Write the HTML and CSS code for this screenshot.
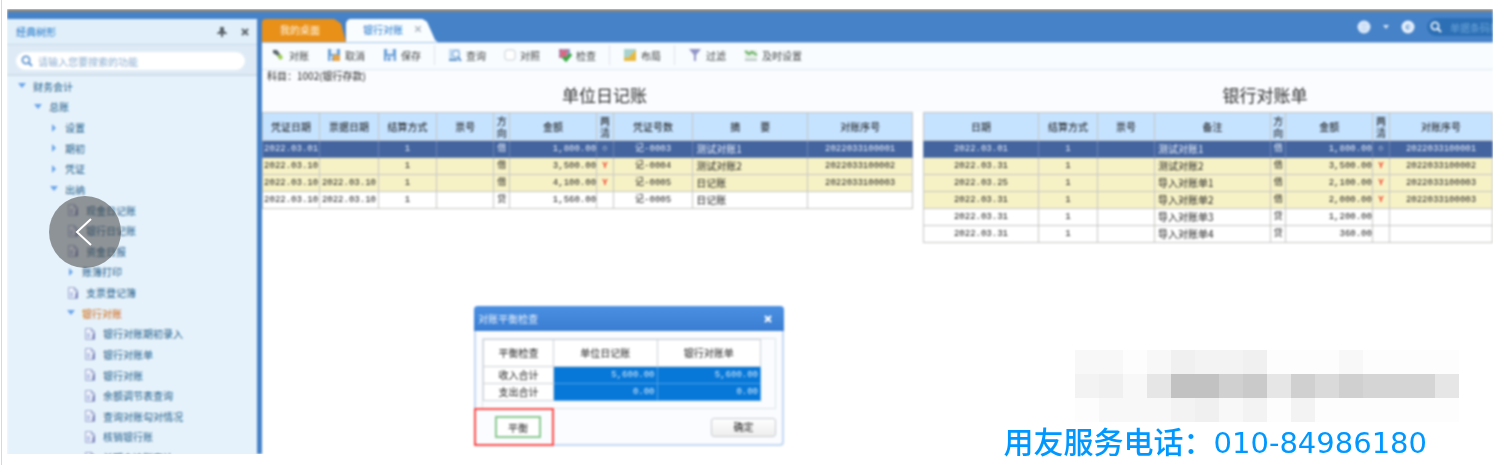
FILE: index.html
```html
<!DOCTYPE html>
<html lang="zh-CN">
<head>
<meta charset="utf-8">
<title>银行对账</title>
<link rel="stylesheet" href="styles.css">
</head>
<body>
<svg class="defs" aria-hidden="true">
  <symbol id="file" viewBox="0 0 12 14"><path d="M1.5 1.5h6l3 3v8h-9z" fill="#eef2fb" stroke="#9daad0"/><path d="M7.5 1.5v3h3" fill="none" stroke="#8d9bc8"/><path d="M3 6h3v5H3z" fill="#b9c6ea"/><path d="M9 6h2v6H8z" fill="#7d87bd"/></symbol>
  <symbol id="down" viewBox="0 0 8 8"><path d="M0 1h8L4 6z" fill="#6aa5ea"/></symbol>
  <symbol id="right" viewBox="0 0 8 8"><path d="M2 0v8l4-4z" fill="#6aa5ea"/></symbol>
  <symbol id="lens" viewBox="0 0 12 12"><circle cx="5" cy="5" r="3.6" fill="none" stroke="currentColor" stroke-width="1.8"/><path d="M7.5 7.5L11 11" stroke="currentColor" stroke-width="2"/></symbol>
  <symbol id="disk" viewBox="0 0 14 14"><path d="M1 1h12v12H1z" fill="#6ba0d8"/><path d="M4 1h6v5H4z" fill="#eaf3fc"/><path d="M3 8h8v5H3z" fill="#dbe9f7"/><path d="M5 9h2v4H5z" fill="#5c93cf"/></symbol>
</svg>
<main class="page">
  <div class="viewer">
    <div class="app">
      <aside class="sidebar">
        <header class="side-head">
          <h2>经典树形</h2>
          <button class="plain" aria-label="固定"><svg width="10" height="10" viewBox="0 0 10 10"><path d="M3 0h4v4l3 2v1H6v3H4V7H0V6l3-2z" fill="#5c646c"/></svg></button>
          <button class="plain" aria-label="关闭"><svg width="8" height="8" viewBox="0 0 8 8"><path d="M1 1l6 6M7 1L1 7" stroke="#5c646c" stroke-width="2"/></svg></button>
        </header>
        <div class="side-search">
          <label class="search"><svg width="12" height="12"><use href="#lens"/></svg><input type="text" aria-label="搜索功能" placeholder="请输入您要搜索的功能"></label>
        </div>
        <nav class="tree">
          <a href="#" class="l0"><svg class="arrow"><use href="#down"/></svg>财务会计</a>
          <a href="#" class="l1"><svg class="arrow"><use href="#down"/></svg>总账</a>
          <a href="#" class="l2"><svg class="arrow"><use href="#right"/></svg>设置</a>
          <a href="#" class="l2"><svg class="arrow"><use href="#right"/></svg>期初</a>
          <a href="#" class="l2"><svg class="arrow"><use href="#right"/></svg>凭证</a>
          <a href="#" class="l2"><svg class="arrow"><use href="#down"/></svg>出纳</a>
          <a href="#" class="l3"><svg class="file"><use href="#file"/></svg>现金日记账</a>
          <a href="#" class="l3"><svg class="file"><use href="#file"/></svg>银行日记账</a>
          <a href="#" class="l3"><svg class="file"><use href="#file"/></svg>资金日报</a>
          <a href="#" class="l3"><svg class="arrow"><use href="#right"/></svg>账簿打印</a>
          <a href="#" class="l3"><svg class="file"><use href="#file"/></svg>支票登记簿</a>
          <a href="#" class="l3 current"><svg class="arrow"><use href="#down"/></svg>银行对账</a>
          <a href="#" class="l4"><svg class="file"><use href="#file"/></svg>银行对账期初录入</a>
          <a href="#" class="l4"><svg class="file"><use href="#file"/></svg>银行对账单</a>
          <a href="#" class="l4"><svg class="file"><use href="#file"/></svg>银行对账</a>
          <a href="#" class="l4"><svg class="file"><use href="#file"/></svg>余额调节表查询</a>
          <a href="#" class="l4"><svg class="file"><use href="#file"/></svg>查询对账勾对情况</a>
          <a href="#" class="l4"><svg class="file"><use href="#file"/></svg>核销银行账</a>
          <a href="#" class="l4"><svg class="file"><use href="#file"/></svg>长期未达账审计</a>
        </nav>
      </aside>
      <section class="work">
        <header class="tabs">
          <a href="#" class="tab home">我的桌面</a>
          <a href="#" class="tab active">银行对账<svg width="6" height="6" viewBox="0 0 6 6"><path d="M0 0l6 6M6 0L0 6" stroke="#aab4be" stroke-width="1.5"/></svg></a>
          <div class="tools">
            <svg width="14" height="14" viewBox="0 0 14 14"><circle cx="7" cy="7" r="6.5" fill="#dceafa"/><path d="M7 2v10M3 5h8M3 9h8" stroke="#bcd4f0"/></svg>
            <svg width="6" height="4" viewBox="0 0 6 4"><path d="M0 0h6L3 4z" fill="#d5e5f7"/></svg>
            <svg width="14" height="14" viewBox="0 0 14 14"><circle cx="7" cy="7" r="6.5" fill="#e4effb"/><circle cx="7" cy="7" r="2.5" fill="#7fa9da"/><path d="M6 6h3v3z" fill="#e4effb"/></svg>
            <label class="top-search"><svg width="12" height="12"><use href="#lens"/></svg><input type="text" aria-label="单据搜索" placeholder="单据条码搜索"></label>
          </div>
        </header>
        <div class="toolbar">
          <button><svg width="14" height="14" viewBox="0 0 14 14"><path d="M2 2h4l3 4-2 2-5-3z" fill="#59656c"/><path d="M6 8l4-2 2 4-3 2z" fill="#9ccb4f"/></svg>对账</button>
          <button><svg width="14" height="14"><use href="#disk"/><path d="M6 8l3-3v2h4v6H6z" fill="#e4a54c"/></svg>取消</button>
          <button><svg width="14" height="14"><use href="#disk"/></svg>保存</button>
          <i class="sep"></i>
          <button><svg width="14" height="14" viewBox="0 0 14 14"><path d="M1 1h11v12H1z" fill="#c4dcf2"/><circle cx="8" cy="6" r="3.5" fill="#eef7ff" stroke="#6fa0d2"/><path d="M10 9l3 4M1 12h8" stroke="#5f91c6" stroke-width="2"/></svg>查询</button>
          <button><svg width="12" height="12" viewBox="0 0 12 12"><rect x="1" y="1" width="10" height="10" rx="2" fill="#fff" stroke="#c9ced4"/></svg>对照</button>
          <button><svg width="14" height="14" viewBox="0 0 14 14"><path d="M1 1h11v9H1z" fill="#8e9bc8"/><path d="M2 2l7 7M9 2L2 9" stroke="#e0647d" stroke-width="3"/><path d="M5 9l3 3 5-6" fill="none" stroke="#35a83f" stroke-width="3"/></svg>检查</button>
          <i class="sep"></i>
          <button><svg width="14" height="14" viewBox="0 0 14 14"><path d="M1 1h12v12H1z" fill="#a9d3cf"/><path d="M1 13V9l4 1 8-8v11z" fill="#e8b93e"/></svg>布局</button>
          <i class="sep"></i>
          <button><svg width="14" height="14" viewBox="0 0 14 14"><path d="M1 1h12L8 7v6H6V7z" fill="#9296c6"/></svg>过滤</button>
          <button><svg width="14" height="14" viewBox="0 0 14 14"><path d="M1 2h12v10H1z" fill="#e3efe6"/><path d="M1 3l4 3 3-2 5 3" fill="none" stroke="#63ad5c" stroke-width="2"/><path d="M1 12h12" stroke="#8f9ba4"/></svg>及时设置</button>
        </div>
        <div class="subject">科目：1002(银行存款)</div>
        <div class="books">
          <section class="book ledger">
            <h1>单位日记账</h1>
            <table>
              <colgroup><col style="width:8.8%"><col style="width:9%"><col style="width:9%"><col style="width:8.8%"><col style="width:2.4%"><col style="width:13.4%"><col style="width:2.6%"><col style="width:12.2%"><col style="width:17.7%"><col style="width:16.1%"></colgroup>
              <thead><tr><th>凭证日期</th><th>票据日期</th><th>结算方式</th><th>票号</th><th>方向</th><th>金额</th><th>两清</th><th>凭证号数</th><th>摘　　要</th><th>对账序号</th></tr></thead>
              <tbody>
                <tr class="sel"><td>2022.03.01</td><td></td><td>1</td><td></td><td>借</td><td class="num">1,800.00</td><td>○</td><td>记-0003</td><td class="txt">测试对账1</td><td>2022033100001</td></tr>
                <tr class="hit"><td>2022.03.10</td><td></td><td>1</td><td></td><td>借</td><td class="num">3,500.00</td><td class="mark">Y</td><td>记-0004</td><td class="txt">测试对账2</td><td>2022033100002</td></tr>
                <tr class="hit"><td>2022.03.10</td><td>2022.03.10</td><td>1</td><td></td><td>借</td><td class="num">4,100.00</td><td class="mark">Y</td><td>记-0005</td><td class="txt">日记账</td><td>2022033100003</td></tr>
                <tr><td>2022.03.10</td><td>2022.03.10</td><td>1</td><td></td><td>贷</td><td class="num">1,560.00</td><td></td><td>记-0005</td><td class="txt">日记账</td><td></td></tr>
              </tbody>
            </table>
          </section>
          <section class="book statement">
            <h1>银行对账单</h1>
            <table>
              <colgroup><col style="width:20.2%"><col style="width:10.4%"><col style="width:10%"><col style="width:20.4%"><col style="width:2.7%"><col style="width:15.2%"><col style="width:3%"><col style="width:18.1%"></colgroup>
              <thead><tr><th>日期</th><th>结算方式</th><th>票号</th><th>备注</th><th>方向</th><th>金额</th><th>两清</th><th>对账序号</th></tr></thead>
              <tbody>
                <tr class="sel"><td>2022.03.01</td><td>1</td><td></td><td class="txt">测试对账1</td><td>借</td><td class="num">1,800.00</td><td>○</td><td>2022033100001</td></tr>
                <tr class="hit"><td>2022.03.31</td><td>1</td><td></td><td class="txt">测试对账2</td><td>借</td><td class="num">3,500.00</td><td class="mark">Y</td><td>2022033100002</td></tr>
                <tr class="hit"><td>2022.03.25</td><td>1</td><td></td><td class="txt">导入对账单1</td><td>借</td><td class="num">2,100.00</td><td class="mark">Y</td><td>2022033100003</td></tr>
                <tr class="hit"><td>2022.03.31</td><td>1</td><td></td><td class="txt">导入对账单2</td><td>借</td><td class="num">2,000.00</td><td class="mark">Y</td><td>2022033100003</td></tr>
                <tr><td>2022.03.31</td><td>1</td><td></td><td class="txt">导入对账单3</td><td>贷</td><td class="num">1,200.00</td><td></td><td></td></tr>
                <tr><td>2022.03.31</td><td>1</td><td></td><td class="txt">导入对账单4</td><td>贷</td><td class="num">360.00</td><td></td><td></td></tr>
              </tbody>
            </table>
          </section>
        </div>
      </section>
      <section class="dialog" role="dialog" aria-labelledby="dlg-title">
        <header><h2 id="dlg-title">对账平衡检查</h2><button class="plain" aria-label="关闭"><svg width="8" height="8" viewBox="0 0 8 8"><path d="M1 1l6 6M7 1L1 7" stroke="#fff" stroke-width="2"/></svg></button></header>
        <div class="sheet">
          <table>
            <thead><tr><th>平衡检查</th><th>单位日记账</th><th>银行对账单</th></tr></thead>
            <tbody>
              <tr><th scope="row">收入合计</th><td>5,600.00</td><td>5,600.00</td></tr>
              <tr><th scope="row">支出合计</th><td>0.00</td><td>0.00</td></tr>
            </tbody>
          </table>
        </div>
        <footer><div class="callout"><button class="balance">平衡</button></div><button class="ok">确定</button></footer>
      </section>
    </div>
  </div>
  <button class="prev" aria-label="上一张"><svg width="18" height="30" viewBox="0 0 18 30"><path d="M16 2L2 15l14 13" fill="none" stroke="#fff" stroke-width="2"/></svg></button>
  <div class="contact">
    <svg width="384" height="72" viewBox="0 0 16 3" shape-rendering="crispEdges" aria-hidden="true">
      <path d="M0 0h16v3H0z" fill="#fdfdfd"/>
      <path d="M0 0h2v1H0zM3 0h1v1H3zM11 0h1v1h-1zM2 1h1v1H2zM1 2h3v1H1zM6 2h1v1H6z" fill="#f8f8f8"/>
      <path d="M4 0h1v1H4zM7 0h1v1H7zM1 1h1v1H1zM5 2h1v1H5z" fill="#f0f0f0"/>
      <path d="M5 0h2v1H5zM0 1h1v1H0zM4 2h1v1H4zM7 2h1v1H7zM9 2h1v1H9z" fill="#f3f3f3"/>
      <path d="M3 1h1v1H3zM8 1h1v1H8zM15 1h1v1h-1z" fill="#e6e6e6"/>
      <path d="M4 1h2v1H4z" fill="#c2c2c2"/>
      <path d="M6 1h1v1H6zM9 1h1v1H9zM11 1h1v1h-1z" fill="#d0d0d0"/>
      <path d="M7 1h1v1H7z" fill="#cacaca"/>
      <path d="M10 1h1v1h-1z" fill="#dadada"/>
      <path d="M12 1h3v1h-3z" fill="#d5d5d5"/>
    </svg>
    <p>用友服务电话：<span>010-84986180</span></p>
  </div>
</main>
</body>
</html>
```
FILE: styles.css
```css
* { box-sizing: border-box; }
body { margin: 0; background: #fff; color: #222; font: 10px "Noto Sans CJK SC", sans-serif; }
h1, h2, p { margin: 0; font-weight: 400; }
a { color: inherit; text-decoration: none; }
button, input { font: inherit; color: inherit; }
button { cursor: pointer; }
svg { display: block; flex: none; }
table { border-collapse: collapse; table-layout: fixed; width: 100%; }
.defs { position: absolute; width: 0; height: 0; }
.plain { border: 0; padding: 0; background: none; }

.page { position: relative; display: flex; min-height: 100vh; padding: 9px 2px 11px 5px; margin-left: 1px; border-left: 1px solid #d8d8d8; }
.viewer { flex: 1; display: flex; overflow: hidden; }
.app { position: relative; flex: 1; display: flex; gap: 5px; min-width: 0; background: #4682c8; border-top: 3px solid #858585; filter: blur(1px); }

.sidebar { width: 250px; margin-top: 7px; margin-bottom: -14px; background: #e6f2fb; color: #245f8c; display: flex; flex-direction: column; }
.side-head { display: flex; align-items: center; gap: 14px; height: 26px; padding: 0 8px 0 9px; background: #e0effa; border-bottom: 1px solid #c6d8e8; }
.side-head h2 { flex: 1; font-size: 10px; color: #2379cb; }
.side-search { padding: 7px 12px 4px 9px; background: #deebf6; border-bottom: 2px solid #cfdeeb; }
.search { display: flex; align-items: center; gap: 5px; height: 18px; padding: 0 5px; border-radius: 9px; background: #fff; color: #6298d3; }
.search input, .top-search input { flex: 1; min-width: 0; border: 0; outline: 0; padding: 0; background: none; }
.search input::placeholder { color: #8fb1d3; }
.tree { flex: 1; display: flex; flex-direction: column; }
.tree a { flex: 1; display: flex; align-items: center; gap: 7px; }
.arrow { width: 8px; height: 8px; }
.file { width: 12px; height: 14px; }
.l0 { padding-left: 11px; }
.l1 { padding-left: 27px; }
.l2 { padding-left: 43px; }
.l3 { padding-left: 60px; }
.l4 { padding-left: 77px; }
.current { color: #d36c0c; }

.work { flex: 1; min-width: 0; display: flex; flex-direction: column; background: #fff; }
.tabs { display: flex; height: 31px; padding-top: 7px; background: #4682c8; border-bottom: 1px solid #a3c4ea; }
.tab { display: flex; align-items: center; padding-bottom: 3px; }
.home { width: 84px; padding-left: 18px; background: #e99019; color: #fff3df; clip-path: polygon(0 0, 86% 0, 94% 20%, 100% 100%, 0 100%); border-radius: 4px 0 0; }
.active { width: 92px; padding-left: 17px; gap: 12px; background: #fafdff; color: #237bd0; border-radius: 5px 0 0; clip-path: polygon(0 0, 83% 0, 88% 12%, 97% 92%, 100% 100%, 0 100%); }
.tools { flex: 1; display: flex; align-items: center; justify-content: flex-end; gap: 12px; padding-bottom: 7px; color: #e4effb; }
.top-search { display: flex; align-items: center; gap: 8px; width: 66px; height: 18px; padding-left: 3px; border-radius: 9px 0 0 9px; background: #2c6fb4; }
.top-search input::placeholder { color: #6ba4dc; }
.toolbar { display: flex; align-items: center; gap: 18px; height: 27px; padding: 0 9px 2px; background: #f8fcff; border-bottom: 1px solid #dbe7f2; }
.toolbar button { display: flex; align-items: center; gap: 4px; border: 0; padding: 0; background: none; color: #444; white-space: nowrap; }
.sep { width: 1px; height: 20px; margin: 0 -5px; background: #dfe5eb; }
.subject { height: 12px; padding-left: 5px; line-height: 12px; background: #fafcff; }
.books { flex: 1; display: grid; grid-template-columns: 651fr 570fr; gap: 10px; background: linear-gradient(#fafcff 30px, #fff 30px); }
.book h1 { height: 30px; font-size: 17px; line-height: 26px; text-align: center; color: #333; }
.ledger h1 { padding-left: 34px; }
.statement h1 { padding-left: 114px; }
.ledger table, .statement table { border: 1px solid #aeb2b8; }
.book th, .book td { border: 1px solid #c5c6c4; padding: 0; text-align: center; overflow: hidden; white-space: nowrap; }
.book th { height: 28px; background: #c5e2ff; color: #111; font-size: 10px; font-weight: 400; line-height: 12px; white-space: normal; }
.book td { height: 17px; line-height: 12px; font-family: "Liberation Mono", "Noto Sans CJK SC", monospace; font-size: 9px; background: #fff; }
.book .num { text-align: right; }
.book .txt { text-align: left; padding-left: 3px; font-family: "Noto Sans CJK SC", sans-serif; font-size: 10px; }
.book .hit td { background: #f7f2c6; }
.book .sel td { background: #43649f; border-color: #6d86b4; color: #e8eefa; }
.book .hit .mark { color: #f03a22; font-weight: 700; }

.dialog { position: absolute; left: 467px; top: 294px; width: 310px; background: #fafcff; border: 2px solid #c3d8f3; border-top: 0; border-radius: 4px; }
.dialog header { display: flex; align-items: center; justify-content: space-between; height: 25px; margin: 0 -2px; padding: 0 12px 0 4px; border-radius: 4px 4px 0 0; background: linear-gradient(#4a90e2, #3a7dd2); color: #e0edfc; }
.dialog h2 { font-size: 10px; }
.sheet { margin: 7px 6px 0; padding: 0 14px 7px 0; border: 1px solid #dfe3e8; }
.sheet th, .sheet td { height: 17px; padding: 0; line-height: 12px; border: 1px solid #ccd1d6; font-weight: 400; }
.sheet th { background: #fff; }
.sheet thead th { height: 27px; }
.sheet thead th:first-child { width: 70px; }
.sheet td { background: #0878d8; border-color: #4aa0e8; color: #d3e9fb; text-align: right; padding-right: 2px; font-family: "Liberation Mono", monospace; font-size: 9px; }
.dialog footer { display: flex; align-items: center; justify-content: space-between; margin: -1px 0 -2px; padding-right: 6px; }
.callout { width: 80px; height: 38px; margin-left: -2px; padding-left: 8px; border: 2px solid #fb4a4a; display: grid; place-items: center; }
.balance { width: 46px; height: 22px; padding: 0; border: 2px solid #8ac890; background: #fff; }
.ok { width: 65px; height: 19px; padding: 0; border: 1px solid #c6cacf; border-radius: 3px; background: linear-gradient(#fff, #eee); line-height: 12px; }

.prev { position: absolute; left: 47px; top: 196px; width: 72px; height: 72px; border: 0; border-radius: 50%; padding: 0 0 0 26px; background: rgba(70, 70, 70, .55); }
.contact { position: absolute; right: 36px; bottom: 4px; display: flex; flex-direction: column; align-items: flex-end; }
.contact p { margin-right: 32px; font-size: 30px; line-height: 36px; font-weight: 500; color: #0098ff; white-space: nowrap; }
.contact span { font-family: "DejaVu Sans", sans-serif; font-size: 29px; }
```
